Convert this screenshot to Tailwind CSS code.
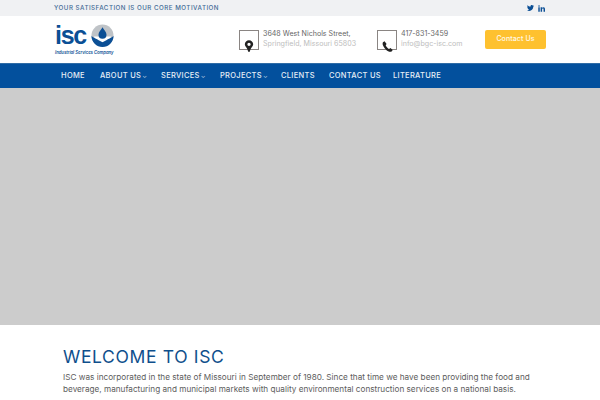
<!DOCTYPE html>
<html lang="en">
<head>
    <meta charset="UTF-8">
    <meta name="viewport" content="width=device-width, initial-scale=1.0">
    <title>ISC</title>
    <script src="https://cdn.jsdelivr.net/npm/@tailwindcss/browser@4"></script>
</head>
<body class="bg-white font-['Inter',sans-serif] overflow-hidden h-[400px]">
    <!-- Top bar -->
    <div class="h-4 bg-[#f0f1f3] flex items-center justify-between pl-[54px] pr-[55px]">
        <span class="text-[6.200px] font-medium tracking-[0.5px] text-[#3f6a96] uppercase">Your satisfaction is our core motivation</span>
        <div class="flex items-center gap-[4px]">
            <svg class="w-[7px] h-[6px]" viewBox="0 0 24 20"><path fill="#0b4f95" d="M24 2.4c-.9.4-1.8.7-2.8.8 1-.6 1.800-1.600 2.200-2.700-1 .6-2 1-3.100 1.200C19.300.7 18 0 16.600 0c-2.700 0-4.900 2.200-4.900 4.900 0 .4 0 .8.100 1.100C7.700 5.800 4.100 3.900 1.700.9 1.300 1.600 1 2.500 1 3.400c0 1.700.9 3.200 2.200 4.100-.8 0-1.600-.2-2.200-.6v.1c0 2.400 1.700 4.400 3.900 4.800-.7.2-1.500.2-2.200.1.600 2 2.400 3.400 4.600 3.400C5.600 17.100 3 18 .0 17.700 2.200 19.100 4.800 20 7.500 20c9.100 0 14-7.500 14-14v-.6c1-.7 1.800-1.600 2.500-3z"/></svg>
            <svg class="w-[7px] h-[7px]" viewBox="0 0 24 24"><path fill="#0b4f95" d="M1 8h5v15H1zM3.500 1a2.700 2.700 0 1 1 0 5.400 2.700 2.700 0 0 1 0-5.400zM9 8h4.700v2.100c.7-1.300 2.300-2.500 4.600-2.500 5 0 5.700 3.200 5.700 7.500V23h-5v-7c0-1.700 0-3.800-2.300-3.800s-2.700 1.800-2.700 3.700V23H9z"/></svg>
        </div>
    </div>

    <!-- Header -->
    <header class="h-[47px] bg-white flex items-center justify-between pl-[55px] pr-[54px]">
        <div class="flex flex-col w-[60px] -mt-[1px]">
            <div class="flex items-center gap-[5px] h-[26px]">
                <span class="text-[25px] leading-[26px] font-bold text-[#0b4f95] tracking-[-1.300px] font-['Liberation_Sans',sans-serif]">isc</span>
                <svg class="w-[23px] h-[23px] shrink-0" viewBox="0 0 24 24">
                    <circle cx="12" cy="12" r="11.500" fill="#bfc3c7"/>
                    <path fill="#fff" d="M3 13h18l-3 6H6z"/>
                    <path fill="#0b4f95" d="M.5 12.500c3 2.500 5.500 3 7.500 4.500l4 2 4-2c2-1.500 4.500-2 7.500-4.500A11.500 11.500 0 0 1 .5 12.500z"/>
                    <path fill="#0b4f95" d="M12 3.500c1.600 3 4.200 5 4.200 7.800a4.200 4.200 0 0 1-8.400 0c0-2.800 2.600-4.800 4.200-7.800z"/>
                </svg>
            </div>
            <span class="text-[4.200px] leading-[6px] mt-[2px] italic font-semibold text-[#0b4f95] whitespace-nowrap">Industrial Services Company</span>
        </div>

        <div class="flex items-center">
            <div class="flex items-center gap-[4px] w-[138px]">
                <div class="relative w-5 h-5 border border-[#8a8583] shrink-0">
                    <svg class="absolute left-[4px] top-[9px] w-[10px] h-3" viewBox="0 0 12 14">
                        <path fill="#222" fill-rule="evenodd" d="M6 0a5 5 0 0 1 5 5c0 2.500-3 4-4 9H5C4 9 1 7.500 1 5a5 5 0 0 1 5-5zm0 3a2 2 0 1 0 0 4 2 2 0 0 0 0-4z"/>
                    </svg>
                </div>
                <div class="text-[7.100px] leading-[10px] whitespace-nowrap -mt-[1px]">
                    <p class="text-[#666]">3648 West Nichols Street,</p>
                    <p class="text-[#bdbdbd]">Springfield, Missouri 65803</p>
                </div>
            </div>
            <div class="flex items-center gap-[4px] w-[108px]">
                <div class="relative w-5 h-5 border border-[#8a8583] shrink-0">
                    <svg class="absolute left-[4px] top-[10px] w-[11px] h-[11px]" viewBox="0 0 12 12">
                        <path fill="#222" d="M2.800.3 1 1.300C.4 2.500.6 4 1.700 6c1.200 2.200 3 4.200 5 5.200 1.400.7 2.700.8 3.800.3l1.200-1.600-2.500-2.200-1.500 1C6.400 8 4.800 6.200 4 4.500l1-1.300z"/>
                    </svg>
                </div>
                <div class="text-[7.100px] leading-[10px] whitespace-nowrap -mt-[1px]">
                    <p class="text-[#666]">417-831-3459</p>
                    <p class="text-[#bdbdbd]">info@bgc-isc.com</p>
                </div>
            </div>
            <a class="w-[61px] h-[19px] flex items-center justify-center rounded-[2px] bg-[#fec12f] text-white/90 text-[7px] font-medium tracking-[0.1px]">Contact Us</a>
        </div>
    </header>

    <!-- Nav -->
    <nav class="h-[25px] bg-[#03509d] border-t border-[#2f6ca6] flex items-center pl-[61px] text-[7.500px] font-medium tracking-[0.3px] text-[#e6eef6] uppercase">
        <a class="w-[39px]">Home</a>
        <a class="w-[61px]">About Us<span class="text-[6px] ml-[1px] text-[#a9c4de]">⌄</span></a>
        <a class="w-[59px]">Services<span class="text-[6px] ml-[1px] text-[#a9c4de]">⌄</span></a>
        <a class="w-[61px]">Projects<span class="text-[6px] ml-[1px] text-[#a9c4de]">⌄</span></a>
        <a class="w-[48px]">Clients</a>
        <a class="w-[64px]">Contact Us</a>
        <a>Literature</a>
    </nav>

    <!-- Hero placeholder -->
    <div class="h-[237px] bg-[#cccccc]"></div>

    <!-- Welcome -->
    <section class="pl-[63px] pr-[60px] pt-[22px]">
        <h1 class="text-[17.500px] leading-[20px] font-normal tracking-[0.65px] text-[#0f4f8c] uppercase">Welcome to ISC</h1>
        <p class="mt-[5px] text-[8.200px] leading-[11.500px] text-[#5c5c5c] whitespace-nowrap">ISC was incorporated in the state of Missouri in September of 1980. Since that time we have been providing the food and<br>beverage, manufacturing and municipal markets with quality environmental construction services on a national basis.</p>
    </section>
</body>
</html>
